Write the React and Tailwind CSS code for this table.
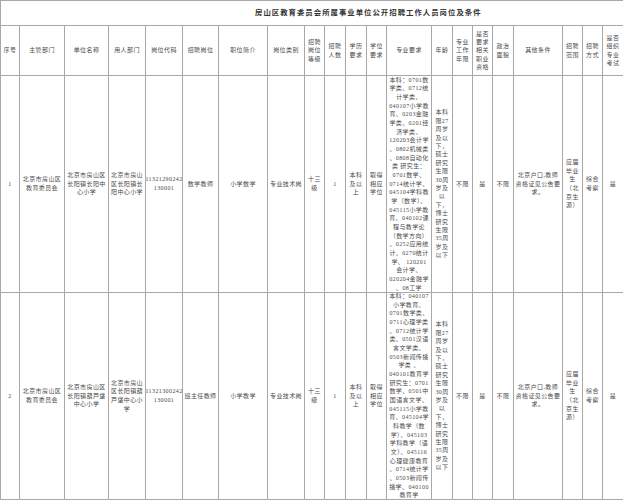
import React from 'react';

const cols =
  'grid-cols-[19px_45px_44px_37px_37px_36px_49px_37px_20px_21px_21px_20px_45px_21px_20px_20px_21px_49px_20px_20px_21px]';

const headers = [
  ['序号'],
  ['主管部门'],
  ['单位名称'],
  ['用人部门'],
  ['岗位代码'],
  ['招聘岗位'],
  ['职位简介'],
  ['岗位类别'],
  ['招聘', '岗位', '等级'],
  ['招聘', '人数'],
  ['学历', '要求'],
  ['学位', '要求'],
  ['专业要求'],
  ['年龄'],
  ['专业', '工作', '年限'],
  ['是否', '要求', '相关', '职业', '资格'],
  ['政治', '面貌'],
  ['其他条件'],
  ['招聘', '范围'],
  ['招聘', '方式'],
  ['是否', '组织', '专业', '考试'],
];

const age = [
  '本科', '限27', '周岁', '及以', '下，', '硕士', '研究', '生限', '30周',
  '岁及', '以', '下，', '博士', '研究', '生限', '35周', '岁及', '以下',
];

const other = ['北京户口,教师', '资格证见公告要', '求。'];
const scope = ['应届', '毕业', '生', '（北', '京生', '源）'];

const rows = [
  [
    ['1'],
    ['北京市房山区', '教育委员会'],
    ['北京市房山区', '长阳镇长阳中', '心小学'],
    ['北京市房山', '区长阳镇长', '阳中心小学'],
    ['11321290242', '130001'],
    ['数学教师'],
    ['小学数学'],
    ['专业技术岗'],
    ['十三', '级'],
    ['1'],
    ['本科', '及以', '上'],
    ['取得', '相应', '学位'],
    [
      '本科：0701数', '学类、0712统', '计学类、', '040107小学教', '育、0203金融',
      '学类、0201经', '济学类、', '120203会计学', '、0802机械类', '、0808自动化',
      '类 研究生：', '0701数学、', '0714统计学、', '045104学科教', '学（数学）、',
      '045115小学教', '育、040102课', '程与教学论', '（数学方向）', '、0252应用统',
      '计、0270统计', '学、 120201', '会计学、', '020204金融学', '、08工学',
    ],
    age,
    ['不限'],
    ['是'],
    ['不限'],
    other,
    scope,
    ['综合', '考察'],
    ['是'],
  ],
  [
    ['2'],
    ['北京市房山区', '教育委员会'],
    ['北京市房山区', '长阳镇葫芦垡', '中心小学'],
    ['北京市房山', '区长阳镇葫', '芦垡中心小', '学'],
    ['11321300242', '130001'],
    ['班主任教师'],
    ['小学教学'],
    ['专业技术岗'],
    ['十三', '级'],
    ['1'],
    ['本科', '及以', '上'],
    ['取得', '相应', '学位'],
    [
      '本科：040107', '小学教育、', '0701数学类、', '0711心理学类', '、0712统计学',
      '类、0501汉语', '言文学类、', '0503新闻传播', '学类 、', '040101教育学',
      '研究生：0701', '数学、0501中', '国语言文学、', '045115小学教', '育、045104学',
      '科教学（数', '学）、045103', '学科教学（语', '文）、045116', '心理健康教育',
      '、0714统计学', '、0503新闻传', '播学、040100', '教育学',
    ],
    age,
    ['不限'],
    ['是'],
    ['不限'],
    other,
    scope,
    ['综合', '考察'],
    ['是'],
  ],
];

function Cell({ lines, leading }) {
  return (
    <div className="flex flex-col items-center justify-center overflow-hidden border-r border-b border-[#a8a8a8] text-center">
      {lines.map((l, i) => (
        <div key={i} className={`whitespace-nowrap ${leading}`}>
          {l}
        </div>
      ))}
    </div>
  );
}

export default function App() {
  return (
    <div className="w-[623px] h-[500px] overflow-hidden bg-white font-['Liberation_Serif','Noto_Sans_CJK_SC',serif] text-[#4a4a4a]">
      <div
        className={`grid ${cols} grid-rows-[25px_50px_217px_207px] border-t border-l border-[#a8a8a8] text-[6px] tracking-[0.4px]`}
      >
        <div className="col-span-21 flex items-center border-r border-b border-[#a8a8a8] pl-[254px]">
          <span className="text-[7.4px] font-bold tracking-[1px] text-[#333]">
            房山区教育委员会所属事业单位公开招聘工作人员岗位及条件
          </span>
        </div>
        {headers.map((h, i) => (
          <Cell key={i} lines={h} leading="leading-[8.2px]" />
        ))}
        {rows.map((r, ri) =>
          r.map((c, ci) => (
            <Cell
              key={`${ri}-${ci}`}
              lines={c}
              leading={ci === 13 ? 'leading-[8.4px]' : 'leading-[8.65px]'}
            />
          ))
        )}
      </div>
    </div>
  );
}
